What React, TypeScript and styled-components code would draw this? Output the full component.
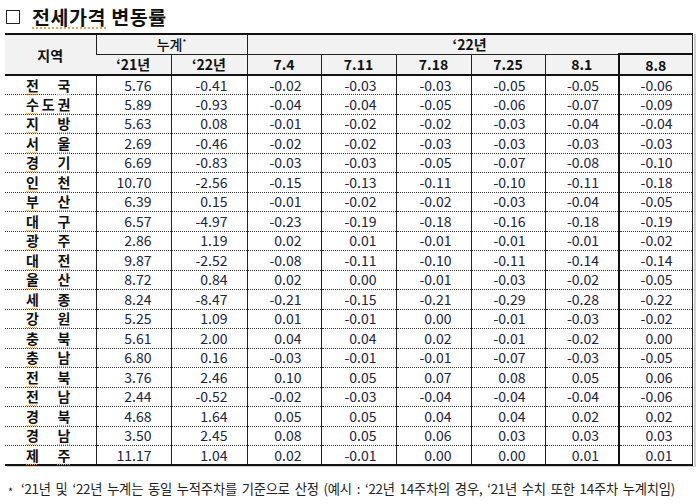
import React from 'react'
import styled, { createGlobalStyle } from 'styled-components'

const GlobalStyle = createGlobalStyle`
  html, body {
    margin: 0;
    padding: 0;
    background: #ffffff;
  }
  body {
    font-family: "Noto Sans CJK KR", "Noto Sans", sans-serif;
    color: #111;
  }
`

interface Row {
  name: string
  values: string[]
}

const rows: Row[] = [
  { name: '전국', values: ['5.76', '-0.41', '-0.02', '-0.03', '-0.03', '-0.05', '-0.05', '-0.06'] },
  { name: '수도권', values: ['5.89', '-0.93', '-0.04', '-0.04', '-0.05', '-0.06', '-0.07', '-0.09'] },
  { name: '지방', values: ['5.63', '0.08', '-0.01', '-0.02', '-0.02', '-0.03', '-0.04', '-0.04'] },
  { name: '서울', values: ['2.69', '-0.46', '-0.02', '-0.02', '-0.03', '-0.03', '-0.03', '-0.03'] },
  { name: '경기', values: ['6.69', '-0.83', '-0.03', '-0.03', '-0.05', '-0.07', '-0.08', '-0.10'] },
  { name: '인천', values: ['10.70', '-2.56', '-0.15', '-0.13', '-0.11', '-0.10', '-0.11', '-0.18'] },
  { name: '부산', values: ['6.39', '0.15', '-0.01', '-0.02', '-0.02', '-0.03', '-0.04', '-0.05'] },
  { name: '대구', values: ['6.57', '-4.97', '-0.23', '-0.19', '-0.18', '-0.16', '-0.18', '-0.19'] },
  { name: '광주', values: ['2.86', '1.19', '0.02', '0.01', '-0.01', '-0.01', '-0.01', '-0.02'] },
  { name: '대전', values: ['9.87', '-2.52', '-0.08', '-0.11', '-0.10', '-0.11', '-0.14', '-0.14'] },
  { name: '울산', values: ['8.72', '0.84', '0.02', '0.00', '-0.01', '-0.03', '-0.02', '-0.05'] },
  { name: '세종', values: ['8.24', '-8.47', '-0.21', '-0.15', '-0.21', '-0.29', '-0.28', '-0.22'] },
  { name: '강원', values: ['5.25', '1.09', '0.01', '-0.01', '0.00', '-0.01', '-0.03', '-0.02'] },
  { name: '충북', values: ['5.61', '2.00', '0.04', '0.04', '0.02', '-0.01', '-0.02', '0.00'] },
  { name: '충남', values: ['6.80', '0.16', '-0.03', '-0.01', '-0.01', '-0.07', '-0.03', '-0.05'] },
  { name: '전북', values: ['3.76', '2.46', '0.10', '0.05', '0.07', '0.08', '0.05', '0.06'] },
  { name: '전남', values: ['2.44', '-0.52', '-0.02', '-0.03', '-0.04', '-0.04', '-0.04', '-0.06'] },
  { name: '경북', values: ['4.68', '1.64', '0.05', '0.05', '0.04', '0.04', '0.02', '0.02'] },
  { name: '경남', values: ['3.50', '2.45', '0.08', '0.05', '0.06', '0.03', '0.03', '0.03'] },
  { name: '제주', values: ['11.17', '1.04', '0.02', '-0.01', '0.00', '0.00', '0.01', '0.01'] },
]

const weeks = ['7.4', '7.11', '7.18', '7.25', '8.1', '8.8']
const colWidths = [91, 75, 76, 74, 75, 75, 74, 74, 73]

const Page = styled.div`
  width: 700px;
  height: 504px;
  box-sizing: border-box;
  padding: 5px 0 0 5px;
  overflow: hidden;
`

const Title = styled.h1`
  display: flex;
  align-items: center;
  gap: 12px;
  margin: 0 0 5px 1px;
  height: 23px;
  font-size: 19.5px;
  font-weight: 700;
  letter-spacing: 0.6px;
  color: #111;
`

const Square = styled.span`
  width: 14px;
  height: 14px;
  border: 1.5px solid #222;
  box-sizing: border-box;
  flex: none;
`

const Wavy = styled.span`
  text-decoration: underline dotted #f0a040;
  text-underline-offset: 3px;
`

const Frame = styled.div`
  width: 689px;
  box-shadow: 2px 1px 0 #cfcfcf;
`

const Table = styled.table`
  border-collapse: collapse;
  table-layout: fixed;
  width: 687px;
  border-top: 2px solid #111;
  border-bottom: 2px solid #111;
  border-right: 1.5px solid #222;
`

const Head = styled.th<{ $bold?: boolean; $thick?: boolean; $h?: number }>`
  background: #f2f2f2;
  font-size: 14px;
  font-weight: ${p => (p.$bold ? 700 : 500)};
  color: #111;
  height: ${p => p.$h ?? 19}px;
  padding: 0;
  line-height: 18px;
  border-left: 1px solid #222;
  border-bottom: ${p => (p.$thick ? '2px solid #111' : '1px solid #222')};
  &:first-child {
    border-left: none;
  }
`

const WeekHead = styled(Head)<{ $focus?: boolean }>`
  ${p =>
    p.$focus &&
    `
    border-left: 2px solid #111;
    border-top: 2px solid #111;
  `}
`

const Sup = styled.sup`
  font-size: 8px;
  vertical-align: top;
  position: relative;
  top: -2px;
`

const BodyRow = styled.tr`
  height: 19.5px;
`

const RegionCell = styled.td<{ $lastRow?: boolean }>`
  padding: 0 25px 0 21px;
  line-height: 17px;
  border-bottom: ${p => (p.$lastRow ? 'none' : '1px dotted #333')};
`

const RegionName = styled.div`
  display: flex;
  justify-content: space-between;
  font-size: 14px;
  font-weight: 700;
  color: #111;
  text-decoration: underline dotted #f0a040;
  text-underline-offset: 3px;
`

const NumCell = styled.td<{ $lastRow?: boolean; $focus?: boolean }>`
  padding: 0 19px 0 0;
  line-height: 17px;
  font-size: 14px;
  font-weight: 400;
  color: #1c2440;
  text-align: right;
  border-left: ${p => (p.$focus ? '2px solid #111' : '1px solid #222')};
  border-bottom: ${p => (p.$lastRow ? 'none' : '1px dotted #333')};
`

const Note = styled.p`
  margin: 14px 0 0 3px;
  font-size: 13.3px;
  line-height: 18px;
  color: #222;
  letter-spacing: -0.2px;
  word-spacing: 2px;
  white-space: nowrap;
  display: flex;
  gap: 8px;
`

const Star = styled.span`
  font-size: 11px;
  padding-top: 2px;
`

export default function App() {
  return (
    <>
      <GlobalStyle />
      <Page>
        <Title>
          <Square />
          <span>
            <Wavy>전세가격</Wavy> 변동률
          </span>
        </Title>
        <Frame>
          <Table>
            <colgroup>
              {colWidths.map((w, i) => (
                <col key={i} style={{ width: w }} />
              ))}
            </colgroup>
            <thead>
              <tr>
                <Head rowSpan={2} $bold $thick>
                  지역
                </Head>
                <Head colSpan={2} $h={18}>
                  누계<Sup>*</Sup>
                </Head>
                <Head colSpan={6} $bold $h={18}>
                  ‘22년
                </Head>
              </tr>
              <tr>
                <Head $bold $thick>‘21년</Head>
                <Head $bold $thick>‘22년</Head>
                {weeks.map((w, i) => (
                  <WeekHead key={w} $bold $thick $focus={i === weeks.length - 1}>
                    {w}
                  </WeekHead>
                ))}
              </tr>
            </thead>
            <tbody>
              {rows.map((r, ri) => {
                const lastRow = ri === rows.length - 1
                return (
                  <BodyRow key={r.name}>
                    <RegionCell $lastRow={lastRow}>
                      <RegionName>
                        {r.name.split('').map((c, ci) => (
                          <span key={ci}>{c}</span>
                        ))}
                      </RegionName>
                    </RegionCell>
                    {r.values.map((v, vi) => (
                      <NumCell key={vi} $lastRow={lastRow} $focus={vi === r.values.length - 1}>
                        {v}
                      </NumCell>
                    ))}
                  </BodyRow>
                )
              })}
            </tbody>
          </Table>
        </Frame>
        <Note>
          <Star>*</Star>
          <span>
            ‘21년 및 ‘22년 누계는 동일 누적주차를 기준으로 산정 (예시 : ‘22년 14주차의 경우, ‘21년 수치 또한 14주차 누계치임)
          </span>
        </Note>
      </Page>
    </>
  )
}
